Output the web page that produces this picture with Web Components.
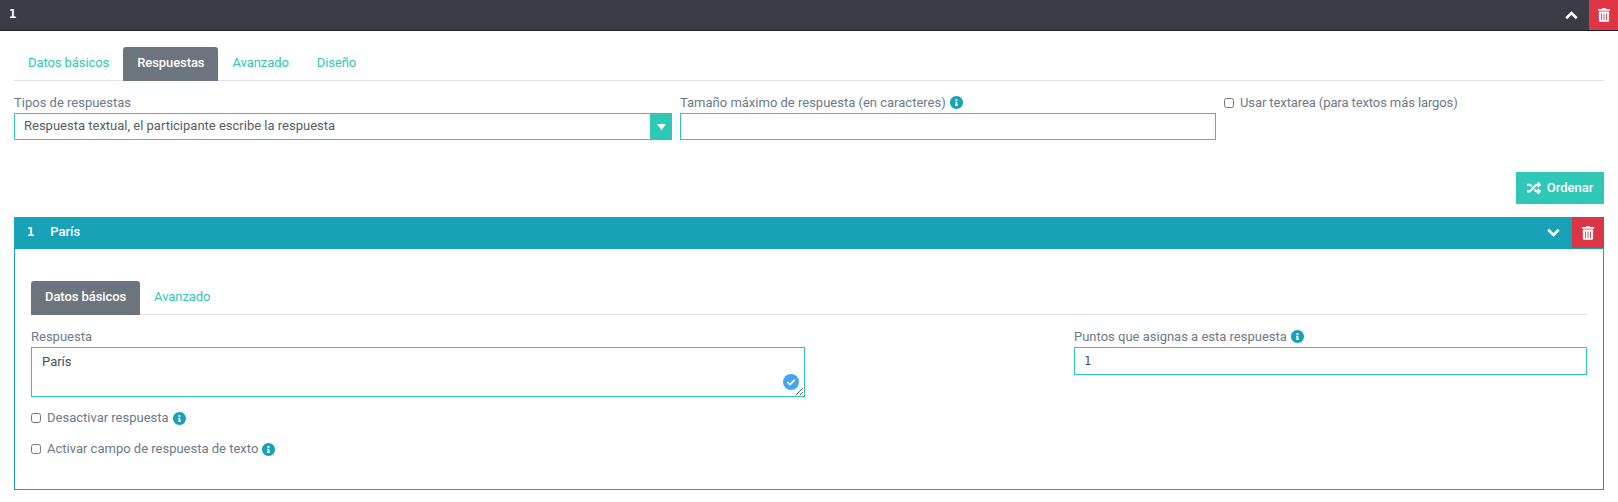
<!DOCTYPE html>
<html lang="es">
<head>
<meta charset="utf-8">
<title>Respuestas</title>
<style>
    body {
        margin: 0;
        background: #fff;
        font: 13px/18px Roboto, "Liberation Sans", sans-serif;
        color: #6c7a89;
    }
</style>
</head>
<body>
<script>
    const TRASH = `<svg viewBox="0 0 448 512" width="12" height="14" fill="#fff"><path d="M32 464a48 48 0 0 0 48 48h288a48 48 0 0 0 48-48V128H32zm272-256a16 16 0 0 1 32 0v224a16 16 0 0 1-32 0zm-96 0a16 16 0 0 1 32 0v224a16 16 0 0 1-32 0zm-96 0a16 16 0 0 1 32 0v224a16 16 0 0 1-32 0zM432 32H312l-9.4-18.7A24 24 0 0 0 281.1 0H166.8a23.72 23.72 0 0 0-21.4 13.3L136 32H16A16 16 0 0 0 0 48v32a16 16 0 0 0 16 16h416a16 16 0 0 0 16-16V48a16 16 0 0 0-16-16z"/></svg>`;

    window.customElements.define("info-icon", class InfoIcon extends HTMLElement {
        constructor() {
            super();
            this.attachShadow({ mode: "open" });
            this.shadowRoot.innerHTML = `
                <style>
                    :host { display: inline-flex; margin-left: 4px; }
                    svg { display: block; }
                </style>
                <svg viewBox="8 8 496 496" width="13" height="13" fill="#17a2b8"><path d="M256 8C119.043 8 8 119.083 8 256c0 136.997 111.043 248 248 248s248-111.003 248-248C504 119.083 392.957 8 256 8zm0 110c23.196 0 42 18.804 42 42s-18.804 42-42 42-42-18.804-42-42 18.804-42 42-42zm56 254c0 6.627-5.373 12-12 12h-88c-6.627 0-12-5.373-12-12v-24c0-6.627 5.373-12 12-12h12v-64h-12c-6.627 0-12-5.373-12-12v-24c0-6.627 5.373-12 12-12h64c6.627 0 12 5.373 12 12v100h12c6.627 0 12 5.373 12 12v24z"/></svg>
            `;
        };
    });

    window.customElements.define("head-bar", class HeadBar extends HTMLElement {
        constructor() {
            super();
            this.attachShadow({ mode: "open" });
            const up = this.hasAttribute("open");
            this.shadowRoot.innerHTML = `
                <style>
                    :host {
                        display: flex;
                        align-items: stretch;
                        height: 32px;
                        background: #17a2b8;
                        color: #fff;
                        font-weight: 500;
                    }
                    :host([dark]) {
                        height: 31px;
                        background: #3a3b45;
                        border-bottom: 1px solid #22232a;
                        box-sizing: border-box;
                    }
                    .title { flex: 1; display: flex; align-items: center; gap: 16px; padding-left: 13px; padding-bottom: 2px; }
                    :host([dark]) .title { padding-left: 9px; padding-bottom: 3px; }
                    .toggle { display: flex; align-items: center; padding-right: 12px; padding-bottom: 2px; }
                    :host([dark]) .toggle { padding-right: 11px; padding-bottom: 0; }
                    .del { width: 32px; height: 31px; background: #dc3545; display: flex; align-items: center; justify-content: center; }
                    :host([dark]) .del { width: 29px; height: 30px; background: #e03546; }
                    svg { display: block; }
                    ::slotted(.mono) { font-family: "DejaVu Sans Mono", monospace; font-size: 12px; font-weight: 700; }
                </style>
                <div class="title"><slot></slot></div>
                <div class="toggle">
                    <svg width="13" height="9" viewBox="0 0 13 9" fill="none" stroke="#fff" stroke-width="2.6">
                        <path d="${up ? "M1.2 7.2 6.5 2 11.8 7.2" : "M1.2 1.8 6.5 7 11.8 1.8"}"/>
                    </svg>
                </div>
                <div class="del">${TRASH}</div>
            `;
        };
    });

    window.customElements.define("tab-strip", class TabStrip extends HTMLElement {
        constructor() {
            super();
            this.attachShadow({ mode: "open" });
            this.shadowRoot.innerHTML = `
                <style>
                    :host { display: flex; border-bottom: 1px solid #dee2e6; height: 33px; }
                </style>
                <slot></slot>
            `;
        };
    });

    window.customElements.define("tab-item", class TabItem extends HTMLElement {
        constructor() {
            super();
            this.attachShadow({ mode: "open" });
            this.shadowRoot.innerHTML = `
                <style>
                    :host {
                        display: block;
                        height: 34px;
                        padding: 0 14px;
                        box-sizing: border-box;
                        line-height: 31px;
                        color: #2fc7b5;
                        font-weight: 400;
                        letter-spacing: -.08px;
                    }
                    :host([active]) {
                        background: #6c757d;
                        color: #fff;
                        font-weight: 500;
                        border-radius: 3px 3px 0 0;
                    }
                </style>
                <slot></slot>
            `;
        };
    });

    window.customElements.define("form-field", class FormField extends HTMLElement {
        constructor() {
            super();
            this.attachShadow({ mode: "open" });
            this.shadowRoot.innerHTML = `
                <style>
                    :host { display: block; }
                    .label { display: flex; align-items: center; height: 18px; padding-top: 1px; box-sizing: border-box; margin-bottom: 2px; }
                </style>
                <div class="label"><slot name="label"></slot></div>
                <slot></slot>
            `;
        };
    });

    window.customElements.define("text-input", class TextInput extends HTMLElement {
        constructor() {
            super();
            this.attachShadow({ mode: "open" });
            const value = this.getAttribute("value") || "";
            const height = this.getAttribute("height") || "28";
            this.shadowRoot.innerHTML = `
                <style>
                    :host { display: block; }
                    input {
                        display: block;
                        width: 100%;
                        height: ${height}px;
                        box-sizing: border-box;
                        border: 1px solid #2fc7b5;
                        border-radius: 0;
                        outline: none;
                        padding: 0 9px;
                        font: 12px "DejaVu Sans Mono", monospace;
                        color: #495057;
                    }
                </style>
                <input type="text" value="${value}">
            `;
        };
    });

    window.customElements.define("select-box", class SelectBox extends HTMLElement {
        constructor() {
            super();
            this.attachShadow({ mode: "open" });
            this.shadowRoot.innerHTML = `
                <style>
                    :host {
                        display: flex;
                        height: 27px;
                        box-sizing: border-box;
                        border: 1px solid #2fc7b5;
                        color: #555e66;
                    }
                    .value { flex: 1; padding-left: 9px; line-height: 24px; }
                    .arrow { width: 22px; margin: -1px -1px -1px 0; background: #2fc7b5; display: flex; align-items: center; justify-content: center; }
                    svg { display: block; }
                </style>
                <div class="value"><slot></slot></div>
                <div class="arrow"><svg width="9" height="6" viewBox="0 0 9 6"><path d="M0 0h9L4.5 6z" fill="#fff"/></svg></div>
            `;
        };
    });

    window.customElements.define("check-field", class CheckField extends HTMLElement {
        constructor() {
            super();
            this.attachShadow({ mode: "open" });
            this.shadowRoot.innerHTML = `
                <style>
                    :host { display: flex; align-items: center; height: 18px; }
                    input { width: 10px; height: 10px; margin: 0 6px 0 0; flex: none; }
                </style>
                <input type="checkbox">
                <slot></slot>
            `;
        };
    });

    window.customElements.define("note-area", class NoteArea extends HTMLElement {
        constructor() {
            super();
            this.attachShadow({ mode: "open" });
            this.shadowRoot.innerHTML = `
                <style>
                    :host { display: block; position: relative; height: 50px; }
                    textarea {
                        display: block;
                        width: 100%;
                        height: 50px;
                        box-sizing: border-box;
                        border: 1px solid #2fc7b5;
                        border-radius: 0;
                        outline: none;
                        padding: 5px 10px;
                        font: 13px/18px Roboto, "Liberation Sans", sans-serif;
                        color: #495057;
                    }
                    .ok { position: absolute; right: 6px; bottom: 7px; display: block; }
                </style>
                <textarea>${this.textContent}</textarea>
                <svg class="ok" width="16" height="16" viewBox="0 0 16 16">
                    <circle cx="8" cy="8" r="8" fill="#42a5f5"/>
                    <path d="M4.4 8.2 7 10.6 11.6 5.8" fill="none" stroke="#fff" stroke-width="1.8"/>
                </svg>
            `;
        };
    });

    window.customElements.define("sort-button", class SortButton extends HTMLElement {
        constructor() {
            super();
            this.attachShadow({ mode: "open" });
            this.shadowRoot.innerHTML = `
                <style>
                    :host {
                        display: flex;
                        align-items: center;
                        justify-content: center;
                        gap: 6px;
                        width: 88px;
                        height: 32px;
                        background: #2fc7b5;
                        color: #fff;
                        font-weight: 500;
                    }
                    svg { display: block; }
                </style>
                <svg viewBox="0 0 512 512" width="14" height="14" fill="#fff"><path d="M504.971 359.029c9.373 9.373 9.373 24.569 0 33.941l-80 79.984c-15.01 15.01-40.971 4.49-40.971-16.971V416h-58.785a12.004 12.004 0 0 1-8.773-3.812l-70.556-75.596 53.333-57.143L352 336h32v-39.981c0-21.438 25.943-31.998 40.971-16.971l80 79.981zM12 176h84l52.781 56.551 53.333-57.143-70.556-75.596A11.999 11.999 0 0 0 122.785 96H12c-6.627 0-12 5.373-12 12v56c0 6.627 5.373 12 12 12zm372 0v39.984c0 21.46 25.961 31.98 40.971 16.971l80-79.984c9.373-9.373 9.373-24.569 0-33.941l-80-79.981C409.943 24.021 384 34.582 384 56.019V96h-58.785a12.004 12.004 0 0 0-8.773 3.812L96 336H12c-6.627 0-12 5.373-12 12v56c0 6.627 5.373 12 12 12h110.785c3.326 0 6.503-1.381 8.773-3.812L352 176h32z"/></svg>
                <slot></slot>
            `;
        };
    });

    window.customElements.define("answer-editor", class AnswerEditor extends HTMLElement {
        constructor() {
            super();
            this.attachShadow({ mode: "open" });
            this.shadowRoot.innerHTML = `
                <style>
                    :host { display: block; padding: 16px 14px 0; }
                    .top { display: grid; grid-template-columns: 658px 536px 1fr; column-gap: 8px; margin-top: 12px; }
                    .top check-field { letter-spacing: -.1px; padding-top: 1px; }
                    .actions { display: flex; justify-content: flex-end; margin: 32px 0 13px; }
                    .panel { border: 1px solid #17a2b8; border-top: 0; padding: 32px 16px 0; height: 241px; box-sizing: border-box; }
                    .cols { display: grid; grid-template-columns: 774px 513px; justify-content: space-between; margin-top: 12px; }
                    .checks { display: grid; row-gap: 13px; margin-top: 12px; }
                    .mono { font-family: "DejaVu Sans Mono", monospace; font-size: 12px; font-weight: 700; }
                </style>
                <tab-strip>
                    <tab-item>Datos básicos</tab-item>
                    <tab-item active>Respuestas</tab-item>
                    <tab-item>Avanzado</tab-item>
                    <tab-item>Diseño</tab-item>
                </tab-strip>
                <div class="top">
                    <form-field>
                        <span slot="label">Tipos de respuestas</span>
                        <select-box>Respuesta textual, el participante escribe la respuesta</select-box>
                    </form-field>
                    <form-field>
                        <span slot="label">Tamaño máximo de respuesta (en caracteres)</span>
                        <info-icon slot="label"></info-icon>
                        <text-input height="27"></text-input>
                    </form-field>
                    <check-field>Usar textarea (para textos más largos)</check-field>
                </div>
                <div class="actions"><sort-button>Ordenar</sort-button></div>
                <head-bar><span class="mono">1</span><span>París</span></head-bar>
                <div class="panel">
                    <tab-strip>
                        <tab-item active>Datos básicos</tab-item>
                        <tab-item>Avanzado</tab-item>
                    </tab-strip>
                    <div class="cols">
                        <div>
                            <form-field>
                                <span slot="label">Respuesta</span>
                                <note-area>París</note-area>
                            </form-field>
                            <div class="checks">
                                <check-field>Desactivar respuesta<info-icon></info-icon></check-field>
                                <check-field>Activar campo de respuesta de texto<info-icon></info-icon></check-field>
                            </div>
                        </div>
                        <form-field>
                            <span slot="label">Puntos que asignas a esta respuesta</span>
                            <info-icon slot="label"></info-icon>
                            <text-input value="1"></text-input>
                        </form-field>
                    </div>
                </div>
            `;
        };
    });

    document.body.innerHTML = `
        <head-bar dark open><span class="mono">1</span></head-bar>
        <answer-editor></answer-editor>
    `;
</script>
</body>
</html>
